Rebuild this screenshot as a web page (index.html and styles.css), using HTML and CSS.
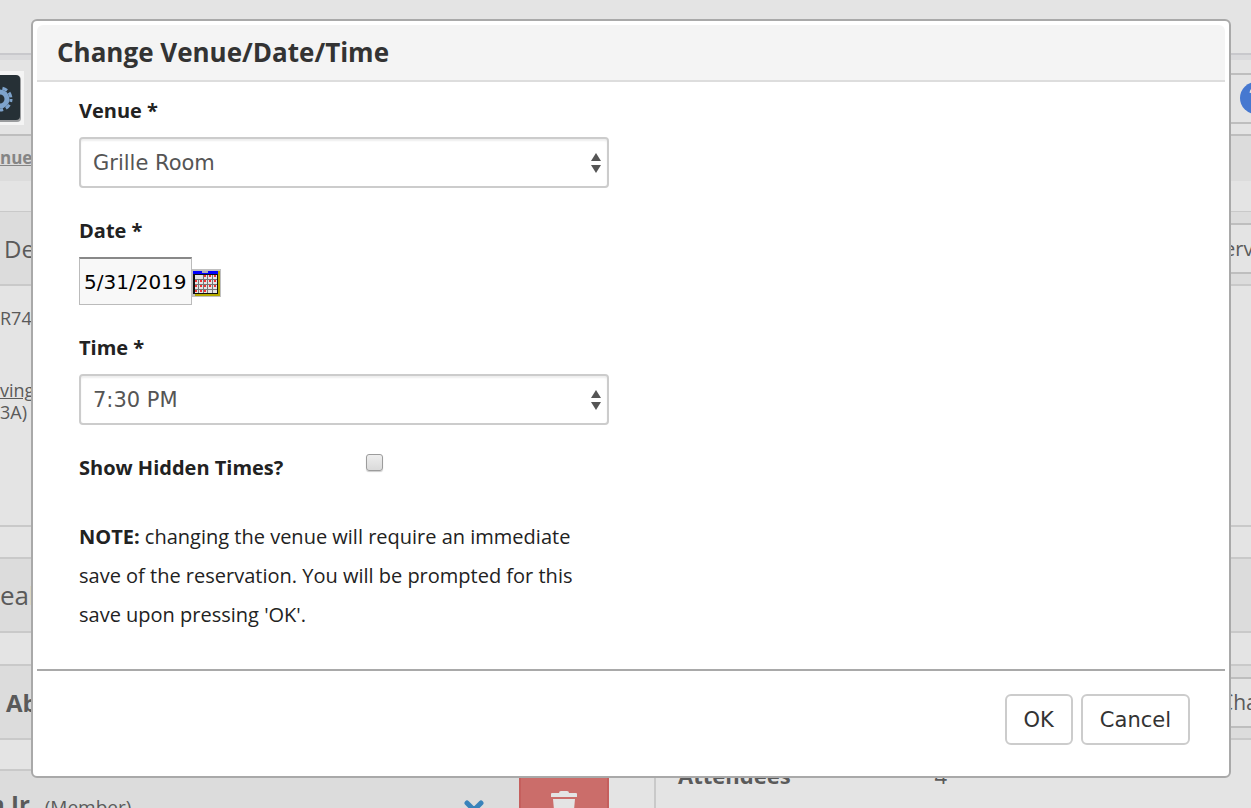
FILE: index.html
```html
<!DOCTYPE html>
<html lang="en">
<head>
  <meta charset="UTF-8">
  <meta name="viewport" content="width=device-width, initial-scale=1.0">
  <title>Change Venue/Date/Time</title>
  <link rel="stylesheet" href="styles.css">
</head>
<body>
  <div class="page">
    <div class="topbar"></div>
    <div class="toolbar">
      <button type="button" class="gear" aria-label="Settings">
        <svg width="24" height="54" viewBox="0 0 24 54">
          <rect width="24" height="54" fill="#f4f4f4"/>
          <rect x="-20" y="5" width="41" height="46" rx="4" fill="#9a9c9e"/>
          <rect x="-20" y="4" width="40" height="45" rx="4" fill="#263036"/>
          <circle cx="0" cy="28" r="7" fill="none" stroke="#7ea3cc" stroke-width="5"/>
          <circle cx="0" cy="28" r="11" fill="none" stroke="#7ea3cc" stroke-width="3" stroke-dasharray="5 3" stroke-dashoffset="2"/>
        </svg>
      </button>
      <button type="button" class="side-button help" aria-label="Help">
        <svg width="32" height="32" viewBox="0 0 32 32">
          <circle cx="16" cy="16" r="16" fill="#4678d0"/>
          <path d="M11 11a5 5 0 1 1 7 5q-2 1-2 4M16 23v3" fill="none" stroke="#e4e4e4" stroke-width="3"/>
        </svg>
      </button>
    </div>
    <div class="tabs"><a href="#">nue</a></div>
    <div class="panel-head first">
      <span class="heading">De</span>
      <button type="button" class="side-button">erv</button>
    </div>
    <div class="details">
      <p>R74</p>
      <p class="booking"><a href="#">ving</a><br>3A)</p>
    </div>
    <div class="panel-head meal"><span class="heading">eal</span></div>
    <div class="panel-head about">
      <span class="heading">Ab</span>
      <button type="button" class="side-button">Cha</button>
    </div>
    <div class="columns">
      <div class="members">
        <div class="member">
          <b>n Jr.</b>
          <span>(Member)</span>
          <svg class="remove" width="20" height="20" viewBox="0 0 20 20">
            <path d="M3 3l14 14M17 3L3 17" stroke="#3983bb" stroke-width="5" stroke-linecap="round"/>
          </svg>
        </div>
        <button type="button" class="delete" aria-label="Delete">
          <svg width="28" height="32" viewBox="0 0 28 32">
            <path d="M1 3q0-1 1-1h7q0-2 2-2h6q2 0 2 2h7q1 0 1 1v3H1zM3 8h22l-2 22q0 2-2 2H7q-2 0-2-2z" fill="#e4e4e4"/>
          </svg>
        </button>
      </div>
      <div class="summary"><b>Attendees</b><span>4</span></div>
    </div>
  </div>

  <div class="overlay">
    <form class="dialog" role="dialog" aria-labelledby="dialogTitle">
      <h1 id="dialogTitle">Change Venue/Date/Time</h1>
      <div class="dialog-body">
        <div class="field">
          <label for="venue">Venue *</label>
          <div class="select-wrap">
            <select id="venue"><option>Grille Room</option></select>
            <svg class="arrows" width="10" height="20" viewBox="0 0 10 20"><path d="M5 0l5 8H0zM5 20l5-8H0z" fill="#555"/></svg>
          </div>
        </div>
        <div class="field">
          <label for="date">Date *</label>
          <div class="date-row">
            <input type="text" id="date" value="5/31/2019">
            <button type="button" class="calendar" aria-label="Pick a date">
              <svg width="29" height="28" viewBox="0 0 29 28">
                <rect width="29" height="28" fill="#c0c0c0"/>
                <path d="M26 2h2v25H3v-2h23z" fill="#b4a800"/>
                <rect x="1" y="5" width="25" height="20" fill="#111"/>
                <path d="M3 6h22v18H3z" fill="#777"/>
                <rect x="1" y="2" width="25" height="3" fill="#00f"/>
                <path d="M10 3h6" stroke="#aab" stroke-width="2"/>
                <path d="M3 6h8v4H3zM12 6h3v4h-3zM16 6h4v4h-4zM21 6h4v4h-4zM3 11h3v4H3zM7 11h4v4H7zM12 11h3v4h-3zM16 11h4v4h-4zM21 11h4v4h-4zM3 16h3v4H3zM7 16h4v4H7zM12 16h3v4h-3zM16 16h4v4h-4zM21 16h4v4h-4zM3 21h3v3H3zM7 21h4v3H7zM12 21h3v3h-3zM16 21h4v3h-4zM21 21h4v3h-4z" fill="#e4e4e4"/>
                <path d="M12 6h2v2h-2zM17 6h2v2h-2zM22 6h2v2h-2zM3 11h2v2H3zM8 11h2v2H8zM12 11h2v2h-2zM17 11h2v2h-2zM22 11h2v2h-2zM3 16h2v2H3zM8 16h2v2H8zM12 16h2v2h-2zM17 16h2v2h-2zM22 16h2v2h-2zM3 21h2v2H3zM8 21h2v2H8zM12 21h2v2h-2z" fill="#e33"/>
              </svg>
            </button>
          </div>
        </div>
        <div class="field">
          <label for="time">Time *</label>
          <div class="select-wrap">
            <select id="time"><option>7:30 PM</option></select>
            <svg class="arrows" width="10" height="20" viewBox="0 0 10 20"><path d="M5 0l5 8H0zM5 20l5-8H0z" fill="#555"/></svg>
          </div>
        </div>
        <div class="check-row">
          <label for="hiddenTimes">Show Hidden Times?</label>
          <input type="checkbox" id="hiddenTimes">
        </div>
        <p class="note"><b>NOTE:</b> changing the venue will require an immediate save of the reservation. You will be prompted for this save upon pressing 'OK'.</p>
      </div>
      <div class="dialog-footer">
        <button type="button">OK</button>
        <button type="button">Cancel</button>
      </div>
    </form>
  </div>
</body>
</html>
```
FILE: styles.css
```css
* {
  box-sizing: border-box;
}

body {
  margin: 0;
  height: 100vh;
  overflow: hidden;
  position: relative;
  background: #e4e4e4;
  color: #222;
  font-family: "Open Sans", sans-serif;
  font-size: 20px;
}

button {
  font-family: inherit;
  cursor: pointer;
}

/* page behind the dialog */
.page {
  height: 100%;
  overflow: hidden;
  color: #5a5a5a;
}

.topbar {
  height: 60px;
  border-bottom: 5px solid #dadadc;
  box-shadow: inset 0 -2px #c8c8cc;
}

.toolbar {
  height: 74px;
  padding-top: 2px;
  display: flex;
  align-items: center;
  justify-content: space-between;
}

.gear {
  border: 0;
  padding: 0;
  height: 54px;
  background: none;
}

.side-button {
  width: 51px;
  height: 51px;
  margin-left: auto;
  padding: 0 0 0 22px;
  overflow: hidden;
  white-space: nowrap;
  text-align: left;
  font-size: 20px;
  color: #5a5a5a;
  background: #e4e4e4;
  border: 2px solid #bebebe;
  border-right: 0;
}

.about .side-button {
  padding-left: 18px;
  font-size: 21px;
}

.help {
  padding-left: 38px;
}

.help svg {
  display: block;
}

.tabs {
  height: 47px;
  border-top: 2px solid #bebebe;
  background: #dcdcdc;
  line-height: 44px;
  font-size: 17px;
  font-weight: bold;
}

.tabs a {
  color: #858585;
}

.panel-head {
  display: flex;
  align-items: center;
  height: 76px;
  margin-top: 30px;
  background: #dcdcdc;
  border-top: 2px solid #c9c9c9;
  border-bottom: 2px solid #c9c9c9;
}

.first {
  height: 75px;
  border-top-width: 1px;
}

.heading {
  font-size: 24px;
}

.first .heading {
  padding-left: 4px;
}

.meal .heading {
  font-size: 26px;
}

.about {
  margin-top: 31px;
}

.about .heading {
  padding-left: 6px;
  font-weight: bold;
}

.details {
  height: 241px;
  padding-top: 21px;
  border-bottom: 2px solid #c9c9c9;
  font-size: 18px;
  line-height: 22px;
}

.details p {
  margin: 0 0 50px;
}

.details a {
  color: inherit;
}

.columns {
  display: flex;
  height: 80px;
}

.members {
  display: flex;
  flex: 0 0 656px;
  padding-top: 29px;
  border-right: 2px solid #c9c9c9;
}

.member {
  flex: 0 0 519px;
  display: flex;
  align-items: flex-end;
  gap: 8px;
  background: #dcdcdc;
  border-top: 2px solid #c9c9c9;
  font-size: 19px;
}

.member b {
  font-size: 24px;
  margin-left: -11px;
}

.remove {
  margin: 0 35px 0 auto;
}

.delete {
  width: 90px;
  padding: 20px 0 0;
  border: 2px solid #c55f5d;
  border-bottom: 0;
  background: #cb6d6a;
}

.summary {
  flex: 1;
  display: flex;
  gap: 144px;
  padding: 20px 22px;
  font-size: 22px;
  line-height: 30px;
}

/* dialog */
.overlay {
  position: absolute;
  inset: 0;
  padding: 19px 20px 0 31px;
}

.dialog {
  padding: 4px;
  background: #fff;
  border: 2px solid #a9a9a9;
  border-radius: 6px;
}

.dialog h1 {
  margin: 0;
  padding: 0 20px;
  height: 57px;
  line-height: 55px;
  font-size: 26px;
  color: #333;
  background: #f4f4f4;
  border-bottom: 2px solid #ddd;
  border-radius: 6px 6px 0 0;
}

.dialog-body {
  max-width: 614px;
  padding: 9px 42px 35px;
  line-height: 39px;
}

.field {
  display: flex;
  flex-direction: column;
  gap: 7px;
  margin-bottom: 23px;
}

.field label,
.check-row label {
  font-weight: bold;
}

.select-wrap {
  display: grid;
  align-items: center;
}

select {
  grid-area: 1 / 1;
  width: 100%;
  height: 51px;
  padding: 0 12px;
  appearance: none;
  font-family: Verdana, "DejaVu Sans", sans-serif;
  font-size: 21px;
  color: #555;
  background: #fff;
  border: 2px solid #ccc;
  border-radius: 4px;
  box-shadow: inset 0 2px 2px #eee;
}

.arrows {
  grid-area: 1 / 1;
  justify-self: end;
  margin-right: 8px;
  pointer-events: none;
}

.date-row {
  display: flex;
  align-items: flex-end;
}

#date {
  width: 113px;
  height: 48px;
  padding: 0 4px;
  font-family: Verdana, "DejaVu Sans", sans-serif;
  font-size: 20px;
  color: #000;
  background: #f8f8f8;
  border: 1px solid #bbb;
  border-top: 2px solid #888;
}

.calendar {
  height: 28px;
  margin-bottom: 8px;
  padding: 0;
  border: 0;
  background: none;
}

.calendar svg {
  display: block;
}

.check-row {
  display: grid;
  grid-template-columns: 287px auto;
  justify-content: start;
}

.check-row input {
  width: 17px;
  height: 17px;
  margin: 6px 0 0;
  appearance: none;
  border: 1px solid #9c9c9c;
  border-radius: 3px;
  background: linear-gradient(#eee, #dadada);
  box-shadow: 0 1px 1px #ccc;
}

.note {
  margin: 30px 0 0;
}

.dialog-footer {
  display: flex;
  justify-content: flex-end;
  gap: 8px;
  padding: 23px 35px 27px;
  border-top: 2px solid #a9a9a9;
}

.dialog-footer button {
  height: 51px;
  padding: 0 17px;
  font-family: Verdana, "DejaVu Sans", sans-serif;
  font-size: 21px;
  color: #333;
  background: #fff;
  border: 2px solid #ccc;
  border-radius: 6px;
}
```
